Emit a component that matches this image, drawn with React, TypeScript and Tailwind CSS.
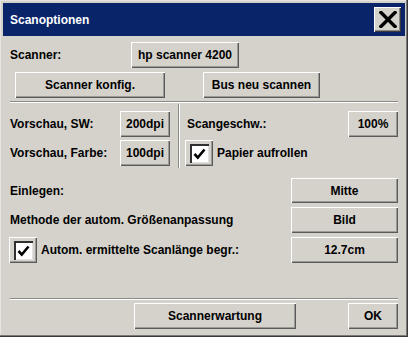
import React from 'react';

const font = "font-['Liberation_Sans',Arial,sans-serif]";

// raised classic 3D button
function Btn({ label, className = '' }: { label: string; className?: string }) {
  return (
    <div
      className={`flex items-center justify-center h-[26px] bg-[#d5d2cc] text-[12px] font-bold text-black shadow-[inset_1px_1px_#ffffff,inset_-1px_-1px_#5a5a5a,inset_-2px_-2px_#9c9a96] ${className}`}
    >
      {label}
    </div>
  );
}

function Check({ className = '' }: { className?: string }) {
  return (
    <div
      className={`flex items-center justify-center w-[28px] h-[26px] bg-[#d5d2cc] shadow-[inset_1px_1px_#ffffff,inset_-1px_-1px_#5a5a5a,inset_-2px_-2px_#9c9a96] ${className}`}
    >
      <div className="w-[19px] h-[19px] bg-white shadow-[inset_2px_2px_#303030,inset_-1px_-1px_#e0e0e0] flex items-center justify-center">
        <svg width="13" height="12" viewBox="0 0 13 12" className="ml-[1px] mt-[1px]">
          <path d="M1.5 6 L4.8 9.6 L11.5 1.5" fill="none" stroke="#000" strokeWidth="2.6" />
        </svg>
      </div>
    </div>
  );
}

function HLine() {
  return <div className="h-[2px] border-t border-[#8c8a86] border-b border-b-white" />;
}

export default function App() {
  return (
    <div
      className={`${font} box-border w-[408px] h-[337px] bg-[#d5d2cc] pt-[3px] px-[3px] shadow-[inset_-1px_-1px_#3a3a3a,inset_-2px_-2px_#7c7a76,inset_1px_1px_#e6e4e0] text-black overflow-hidden`}
    >
      {/* title bar */}
      <div className="flex items-center justify-between h-[33px] bg-[#0a246a] pl-[7px] pr-[4px]">
        <span className="text-white text-[12px] font-bold">Scanoptionen</span>
        <div className="flex items-center justify-center w-[27px] h-[25px] bg-[#d5d2cc] shadow-[inset_1px_1px_#ffffff,inset_-1px_-1px_#3a3a3a,inset_-2px_-2px_#8a8884]">
          <svg width="18" height="17" viewBox="0 0 18 17">
            <path d="M2 1.5 L16 15.5 M16 1.5 L2 15.5" stroke="#000" strokeWidth="3.4" strokeLinecap="square" />
          </svg>
        </div>
      </div>

      <div className="px-[7px]">
        {/* scanner */}
        <div className="flex items-center mt-[6px]">
          <span className="w-[121px] text-[12px] font-bold">Scanner:</span>
          <Btn label="hp scanner 4200" className="w-[108px]" />
        </div>
        <div className="flex mt-[4px] ml-[5px] gap-[38px]">
          <Btn label="Scanner konfig." className="w-[150px]" />
          <Btn label="Bus neu scannen" className="w-[117px]" />
        </div>

        <div className="mt-[3px]">
          <HLine />
        </div>

        {/* preview / speed */}
        <div className="flex">
          <div className="w-[168px] pt-[8px]">
            <div className="flex items-center">
              <span className="w-[110px] text-[12px] font-bold">Vorschau, SW:</span>
              <Btn label="200dpi" className="w-[50px]" />
            </div>
            <div className="flex items-center mt-[3px]">
              <span className="w-[110px] text-[12px] font-bold">Vorschau, Farbe:</span>
              <Btn label="100dpi" className="w-[50px]" />
            </div>
          </div>
          <div className="w-[2px] mt-[1px] h-[64px] border-l border-[#8c8a86] border-r border-r-white" />
          <div className="flex-1 pt-[8px] pl-[5px]">
            <div className="flex items-center justify-between">
              <span className="pl-[2px] text-[12px] font-bold">Scangeschw.:</span>
              <Btn label="100%" className="w-[50px]" />
            </div>
            <div className="flex items-center mt-[3px] gap-[4px]">
              <Check />
              <span className="text-[12px] font-bold">Papier aufrollen</span>
            </div>
          </div>
        </div>

        {/* feed options */}
        <div className="flex items-center justify-between mt-[10px]">
          <span className="text-[12px] font-bold">Einlegen:</span>
          <Btn label="Mitte" className="w-[107px] !h-[25px]" />
        </div>
        <div className="flex items-center justify-between mt-[4px]">
          <span className="text-[12px] font-bold">Methode der autom. Größenanpassung</span>
          <Btn label="Bild" className="w-[107px]" />
        </div>
        <div className="flex items-center justify-between mt-[4px]">
          <div className="flex items-center gap-[4px] -ml-[1px]">
            <Check />
            <span className="text-[12px] font-bold">Autom. ermittelte Scanlänge begr.:</span>
          </div>
          <Btn label="12.7cm" className="w-[107px]" />
        </div>

        <div className="mt-[35px]">
          <HLine />
        </div>

        <div className="flex justify-end gap-[52px] mt-[3px]">
          <Btn label="Scannerwartung" className="w-[162px]" />
          <Btn label="OK" className="w-[50px]" />
        </div>
      </div>
    </div>
  );
}
